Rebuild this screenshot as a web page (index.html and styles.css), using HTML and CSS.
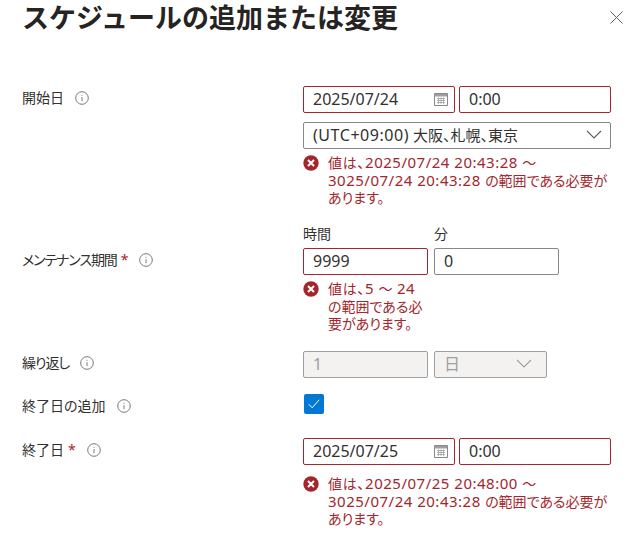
FILE: index.html
```html
<!DOCTYPE html>
<html lang="ja">
<head>
    <meta charset="UTF-8">
    <meta name="viewport" content="width=device-width, initial-scale=1.0">
    <title>スケジュールの追加または変更</title>
    <link rel="stylesheet" href="styles.css">
</head>
<body>
    <svg class="icon-defs" width="0" height="0">
        <symbol id="info" viewBox="0 0 14 14">
            <circle cx="7" cy="7" r="6.3" fill="none" stroke="#7a7978" stroke-width="1"/>
            <path d="M7 6.2v4M7 3.8v1" fill="none" stroke="#7a7978" stroke-width="1"/>
        </symbol>
        <symbol id="error" viewBox="0 0 16 16">
            <circle cx="8" cy="8" r="7.7" fill="#a4262c"/>
            <path d="M5 5l6 6M11 5l-6 6" fill="none" stroke="#fff" stroke-width="2"/>
        </symbol>
        <symbol id="calendar" viewBox="0 0 14 14">
            <path d="M.5 1.5h13v12H.5z" fill="none" stroke="#8a8886"/>
            <path d="M1 2h12v2.5H1z" fill="#a19f9d"/>
            <path d="M3 6.5h8M3 8.5h8M3 10.5h8M4.5 5.5v6.5M7 5.5v6.5M9.500 5.500v6.500" fill="none" stroke="#a19f9d" stroke-width=".8"/>
        </symbol>
        <symbol id="chevron" viewBox="0 0 16 9">
            <path d="M1 1l7 7 7-7" fill="none" stroke="currentColor" stroke-width="1.100"/>
        </symbol>
    </svg>

    <header class="panel-header">
        <h1 class="panel-title">スケジュールの追加または変更</h1>
        <button class="close-button" aria-label="閉じる">
            <svg width="13" height="13" viewBox="0 0 13 13"><path d="M.5.5l12 12M12.500.5l-12 12" fill="none" stroke="#605e5c" stroke-width="1"/></svg>
        </button>
    </header>

    <div class="form">
        <!-- 開始日 -->
        <div class="form-row row-start">
            <div class="form-label">
                <span>開始日</span>
                <svg class="info-icon"><use href="#info"/></svg>
            </div>
            <div class="form-field">
                <div class="input-pair">
                    <div class="input input-error date-input">
                        <span class="latin">2025/07/24</span>
                        <svg class="calendar-icon"><use href="#calendar"/></svg>
                    </div>
                    <div class="input input-error"><span class="latin">0:00</span></div>
                </div>
                <div class="input select zone-select">
                    <span><span class="latin zone-offset">(UTC+09:00)</span>大阪、札幌、東京</span>
                    <svg class="chevron-icon"><use href="#chevron"/></svg>
                </div>
                <div class="error-message">
                    <svg class="error-icon"><use href="#error"/></svg>
                    <p><span class="lead">値は、</span><span class="latin">2025/07/24 20:43:28 </span>～<br><span class="latin">3025/07/24 20:43:28 </span>の範囲である必要が<br>あります。</p>
                </div>
            </div>
        </div>

        <!-- メンテナンス期間 -->
        <div class="form-row row-duration">
            <div class="form-label label-duration">
                <span class="tight">メンテナンス期間</span>
                <span class="required">*</span>
                <svg class="info-icon"><use href="#info"/></svg>
            </div>
            <div class="form-field duration-fields">
                <div class="duration-col">
                    <label class="field-caption">時間</label>
                    <div class="input input-error"><span class="latin">9999</span></div>
                    <div class="error-message">
                        <svg class="error-icon"><use href="#error"/></svg>
                        <p><span class="lead">値は、</span><span class="latin">5 </span>～<span class="latin"> 24</span><br>の範囲である必<br>要があります。</p>
                    </div>
                </div>
                <div class="duration-col">
                    <label class="field-caption">分</label>
                    <div class="input"><span class="latin">0</span></div>
                </div>
            </div>
        </div>

        <!-- 繰り返し -->
        <div class="form-row row-repeat">
            <div class="form-label">
                <span class="tight">繰り返し</span>
                <svg class="info-icon"><use href="#info"/></svg>
            </div>
            <div class="form-field repeat-fields">
                <div class="input input-disabled repeat-count"><span class="latin">1</span></div>
                <div class="input input-disabled select repeat-unit">
                    <span class="unit-text">日</span>
                    <svg class="chevron-icon"><use href="#chevron"/></svg>
                </div>
            </div>
        </div>

        <!-- 終了日の追加 -->
        <div class="form-row row-check">
            <div class="form-label">
                <span>終了日の追加</span>
                <svg class="info-icon"><use href="#info"/></svg>
            </div>
            <div class="form-field">
                <div class="checkbox">
                    <svg width="12" height="10" viewBox="0 0 12 10"><path d="M.8 5.200l3.400 3.600L11.200.8" fill="none" stroke="#fff" stroke-width="1"/></svg>
                </div>
            </div>
        </div>

        <!-- 終了日 -->
        <div class="form-row">
            <div class="form-label">
                <span>終了日</span>
                <span class="required">*</span>
                <svg class="info-icon"><use href="#info"/></svg>
            </div>
            <div class="form-field">
                <div class="input-pair">
                    <div class="input input-error date-input">
                        <span class="latin">2025/07/25</span>
                        <svg class="calendar-icon"><use href="#calendar"/></svg>
                    </div>
                    <div class="input input-error"><span class="latin">0:00</span></div>
                </div>
                <div class="error-message end-error">
                    <svg class="error-icon"><use href="#error"/></svg>
                    <p><span class="lead">値は、</span><span class="latin">2025/07/25 20:48:00 </span>～<br><span class="latin">3025/07/24 20:43:28 </span>の範囲である必要が<br>あります。</p>
                </div>
            </div>
        </div>
    </div>
</body>
</html>
```

FILE: styles.css
```css
body {
    margin: 0;
    height: 538px;
    overflow: hidden;
    background-color: #fff;
    color: #323130;
    font-family: "Noto Sans", "Noto Sans CJK JP", sans-serif;
    font-size: 14px;
    line-height: 18px;
    font-feature-settings: "palt";
}
.latin {
    font-size: 16px;
    line-height: 18px;
}
.tight {
    letter-spacing: -1.1px;
}
.icon-defs {
    position: absolute;
}
.panel-header {
    display: flex;
    justify-content: space-between;
    align-items: flex-start;
    height: 86px;
    padding: 0 14px 0 22px;
}
.panel-title {
    margin: 0;
    font-family: "Noto Sans CJK JP", sans-serif;
    font-size: 27px;
    line-height: 34px;
    font-weight: 700;
    color: #252423;
    font-feature-settings: normal;
}
.close-button {
    margin-top: 11px;
    padding: 0;
    border: none;
    background: none;
    line-height: 0;
}
.form {
    display: flex;
    flex-direction: column;
}
.form-row {
    display: flex;
    padding-left: 22px;
}
.row-start {
    height: 138px;
}
.row-duration {
    height: 127px;
}
.row-repeat {
    height: 43px;
}
.row-check {
    height: 44px;
}
.form-label {
    width: 281px;
    flex-shrink: 0;
    display: flex;
    align-items: center;
    height: 24px;
    font-size: 14px;
}
.label-duration {
    margin-top: 24px;
}
.required {
    margin-left: 4px;
    color: #a4262c;
}
.info-icon {
    width: 14px;
    height: 14px;
    margin-left: 11px;
}
.form-field {
    width: 308px;
}
.input-pair {
    display: flex;
    gap: 4px;
}
.input {
    box-sizing: border-box;
    flex: 1;
    display: flex;
    align-items: center;
    justify-content: space-between;
    height: 27px;
    padding: 0 8px 2px 9px;
    border: 1px solid #8a8886;
    border-radius: 2px;
}
.input-error {
    border-color: #a4262c;
}
.input-disabled {
    background-color: #f3f2f1;
    border-color: #a19f9d;
    color: #a19f9d;
}
.calendar-icon {
    width: 14px;
    height: 14px;
    margin-right: -2px;
}
.chevron-icon {
    width: 16px;
    height: 9px;
    color: #605e5c;
}
.zone-select {
    margin-top: 9px;
    font-size: 15px;
}
.zone-offset {
    margin-right: 4px;
    letter-spacing: .55px;
}
.unit-text {
    font-size: 16px;
}
.error-message {
    display: flex;
    gap: 9px;
    margin-top: 5px;
    color: #a4262c;
}
.error-message p {
    margin: 0;
    line-height: 17.5px;
    white-space: nowrap;
}
.error-message .latin {
    font-size: 15px;
    line-height: 14px;
    letter-spacing: .5px;
}
.lead {
    letter-spacing: .7px;
}
.error-icon {
    width: 16px;
    height: 16px;
    flex-shrink: 0;
    margin-top: 1px;
}
.end-error {
    margin-top: 10px;
}
.duration-fields {
    display: flex;
    gap: 6px;
}
.duration-col {
    width: 125px;
}
.field-caption {
    display: block;
    height: 24px;
    line-height: 20px;
}
.repeat-fields {
    display: flex;
    gap: 6px;
}
.repeat-count {
    flex: none;
    width: 125px;
}
.repeat-unit {
    flex: none;
    width: 113px;
}
.repeat-unit .chevron-icon {
    color: #a19f9d;
    margin-right: 6px;
}
.checkbox {
    display: flex;
    align-items: center;
    justify-content: center;
    width: 20px;
    height: 20px;
    margin-left: 1px;
    border-radius: 2px;
    background-color: #0078d4;
}
```
